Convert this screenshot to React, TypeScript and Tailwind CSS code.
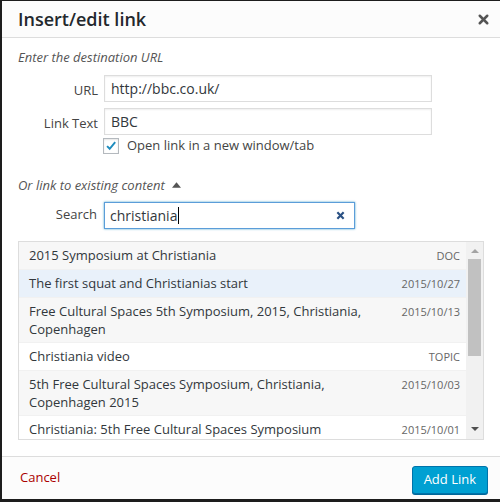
import { X } from "lucide-react";

const FONT = { fontFamily: '"Open Sans", "Liberation Sans", sans-serif' };

type Result = { title: string; info: string; tone: "gray" | "white" | "active" };

const RESULTS: Result[] = [
  { title: "2015 Symposium at Christiania", info: "DOC", tone: "gray" },
  { title: "The first squat and Christianias start", info: "2015/10/27", tone: "active" },
  { title: "Free Cultural Spaces 5th Symposium, 2015, Christiania, Copenhagen", info: "2015/10/13", tone: "gray" },
  { title: "Christiania video", info: "TOPIC", tone: "white" },
  { title: "5th Free Cultural Spaces Symposium, Christiania, Copenhagen 2015", info: "2015/10/03", tone: "gray" },
  { title: "Christiania: 5th Free Cultural Spaces Symposium", info: "2015/10/01", tone: "white" },
];

function Field({ label, value }: { label: string; value: string }) {
  return (
    <div className="flex items-center">
      <span className="w-[86px] pt-[5px] pr-[6px] text-right text-[13px] text-[#444]">{label}</span>
      <div className="flex h-[27px] w-[328px] items-center border border-[#ddd] bg-white px-[6px] text-[14px] text-[#32373c] shadow-[inset_0_1px_2px_rgba(0,0,0,0.07)]">
        {value}
      </div>
    </div>
  );
}

export default function App() {
  return (
    <div className="h-[502px] w-[500px] bg-[#1d1d1d] pt-px pl-[2px] pb-[3px]" style={FONT}>
      <div className="flex h-full flex-col bg-white">
        {/* header */}
        <header className="flex h-[37px] items-center justify-between border-b border-[#ddd] bg-[#fcfcfc] pl-[16px] pr-[9px]">
          <h1 className="text-[18px] font-semibold text-[#23282d]">Insert/edit link</h1>
          <X className="h-[15px] w-[15px] text-[#555]" strokeWidth={4} />
        </header>

        <div className="px-[16px]">
          <p className="mt-[9px] text-[13px] leading-[20px] italic text-[#555]">Enter the destination URL</p>

          <div className="mt-[8px] flex flex-col gap-[6px]">
            <Field label="URL" value="http://bbc.co.uk/" />
            <Field label="Link Text" value="BBC" />
          </div>

          <label className="mt-[1px] ml-[85px] flex items-center gap-[8px] text-[13px] text-[#444]">
            <span className="flex h-[16px] w-[16px] items-center justify-center border border-[#b4b9be] bg-white shadow-[inset_0_1px_2px_rgba(0,0,0,0.1)]">
              <svg viewBox="0 0 16 16" className="h-[14px] w-[14px]">
                <path d="M3.5 8.2 L6.5 11.2 L12.8 3.6" fill="none" stroke="#1e8cbe" strokeWidth="2.2" />
              </svg>
            </span>
            Open link in a new window/tab
          </label>

          <p className="mt-[19px] flex items-center gap-[7px] text-[13px] leading-[20px] italic text-[#555]">
            Or link to existing content
            <svg viewBox="0 0 10 6" className="h-[6px] w-[9px]">
              <path d="M0 6 L5 0 L10 6 Z" fill="#555" />
            </svg>
          </p>

          <div className="mt-[7px] flex items-center">
            <span className="w-[86px] pr-[7px] text-right text-[13px] text-[#444]">Search</span>
            <div className="flex h-[27px] w-[251px] items-center justify-between border border-[#5b9dd9] bg-white pl-[5px] pr-[9px] text-[14px] text-[#32373c] shadow-[0_0_2px_rgba(30,140,190,0.8)]">
              <span className="flex items-center">
                christiania
                <span className="ml-px h-[17px] w-px bg-black" />
              </span>
              <svg viewBox="0 0 10 10" className="h-[9px] w-[9px]">
                <path d="M1.5 1.5 L8.5 8.5 M8.5 1.5 L1.5 8.5" stroke="#2a5184" strokeWidth="2.4" />
              </svg>
            </div>
          </div>

          {/* results */}
          <div className="mt-[12px] flex h-[199px] border border-[#ddd] bg-white">
            <ul className="flex-1 overflow-hidden">
              {RESULTS.map((r) => (
                <li
                  key={r.title}
                  className={
                    r.tone === "active"
                      ? "flex justify-between gap-[20px] border-b border-[#f1f1f1] bg-[#e9f1fa] py-[4px] pr-[6px] pl-[10px]"
                      : r.tone === "gray"
                        ? "flex justify-between gap-[20px] border-b border-[#f1f1f1] bg-[#f7f7f7] py-[4px] pr-[6px] pl-[10px]"
                        : "flex justify-between gap-[20px] border-b border-[#f1f1f1] bg-white py-[4px] pr-[6px] pl-[10px]"
                  }
                >
                  <span className="text-[13px] leading-[18px] text-[#32373c]">{r.title}</span>
                  <span className="shrink-0 pt-px text-[11px] leading-[18px] text-[#666]">{r.info}</span>
                </li>
              ))}
            </ul>
            {/* scrollbar */}
            <div className="flex w-[17px] flex-col items-center bg-[#f1f1f1] py-[3px]">
              <svg viewBox="0 0 8 4" className="mt-[4px] h-[4px] w-[8px]">
                <path d="M0 4 L4 0 L8 4 Z" fill="#a3a3a3" />
              </svg>
              <div className="mt-[6px] h-[97px] w-[13px] bg-[#c1c1c1]" />
              <svg viewBox="0 0 8 4" className="mt-auto mb-[5px] h-[4px] w-[8px]">
                <path d="M0 0 L8 0 L4 4 Z" fill="#505050" />
              </svg>
            </div>
          </div>
        </div>

        {/* footer */}
        <footer className="mt-auto flex h-[43px] items-center justify-between border-t border-[#ddd] bg-[#fcfcfc] pl-[18px] pr-[12px]">
          <a className="text-[13px] text-[#a00]">Cancel</a>
          <button className="mt-[3px] h-[28px] rounded-[3px] border border-[#0073aa] bg-[#00a0d2] px-[11px] text-[13px] text-white shadow-[0_1px_0_#006799]">
            Add Link
          </button>
        </footer>
      </div>
    </div>
  );
}
